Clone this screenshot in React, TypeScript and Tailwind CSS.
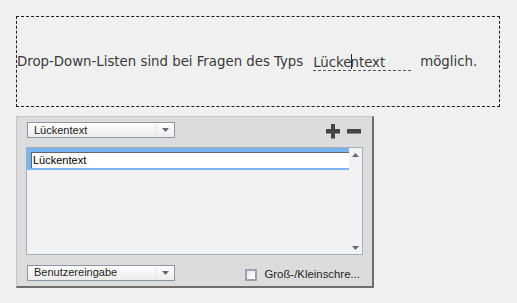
const Triangle = ({ up = false }: { up?: boolean }) => (
  <svg width="7" height="4" viewBox="0 0 7 4" className="block">
    {up ? (
      <polygon points="0,4 7,4 3.5,0" fill="#636a7c" />
    ) : (
      <polygon points="0,0 7,0 3.5,4" fill="#636a7c" />
    )}
  </svg>
);

const Dropdown = ({ label }: { label: string }) => (
  <div className="w-[148px] h-[16px] flex items-center border border-[#8d95a9] bg-gradient-to-b from-white to-[#ececec]">
    <span className="flex-1 pl-[6px] text-[11px] leading-none text-[#1c1c1c]">{label}</span>
    <div className="w-px h-[12px] bg-[#e4e4e4]" />
    <div className="w-[17px] flex justify-center">
      <Triangle />
    </div>
  </div>
);

const PlusMinus = () => (
  <div className="flex items-center gap-[6px] pt-[2px]">
    <svg width="15" height="15" viewBox="0 0 15 15">
      <rect x="0" y="5" width="14" height="5" fill="#8a8a8a" />
      <rect x="5" y="0" width="4" height="15" fill="#8a8a8a" />
      <rect x="0" y="5" width="14" height="4" fill="#454545" />
      <rect x="5" y="0" width="4" height="14" fill="#454545" />
    </svg>
    <svg width="15" height="15" viewBox="0 0 15 15">
      <rect x="0" y="5" width="14" height="5" fill="#8a8a8a" />
      <rect x="0" y="5" width="14" height="4" fill="#454545" />
    </svg>
  </div>
);

export default function App() {
  return (
    <div className="w-[517px] h-[303px] bg-[#f0f0f0] pt-4 pl-4 font-['Liberation_Sans',Arial,sans-serif]">
      <div className="w-[484px] h-[91px] border border-dashed border-[#1e1e1e] flex items-center">
        <p className="text-[14.8px] text-[#3a3a3a] whitespace-nowrap flex items-center font-['DejaVu_Sans_Condensed','DejaVu_Sans',sans-serif]">
          <span>Drop-Down-Listen sind bei Fragen des Typs</span>
          <span className="relative ml-[10px] w-[98px] border-b border-dashed border-[#555] leading-[17px]">
            Lücke
            <span className="inline-block w-px h-[15px] bg-[#222] align-middle -mt-[2px] -mx-px" />
            ntext
          </span>
          <span className="ml-[9px]">möglich.</span>
        </p>
      </div>

      <div className="mt-[9px] w-[358px] h-[172px] bg-[#dcdcdc] border border-t-[#c4c4c4] border-l-[#c4c4c4] border-r-2 border-b-2 border-r-[#6f6f6f] border-b-[#6f6f6f] pl-[9px] pt-[5px] text-[11px]">
        <div className="w-[336px] flex justify-between items-start">
          <div className="ml-px">
            <Dropdown label="Lückentext" />
          </div>
          <PlusMinus />
        </div>

        <div className="mt-[8px] w-[337px] h-[108px] border border-[#a7adba] bg-[#f2f2f2] flex">
          <div className="flex-1">
            <div className="bg-[#78b5f0] pt-[4px] pl-[4px] pb-[2px]">
              <div className="h-[16px] bg-white border-t border-l border-[#5f6672] flex items-center pl-[1px] text-[11px] text-black">
                Lückentext
              </div>
            </div>
          </div>
          <div className="w-[13px] flex flex-col items-center justify-between pt-[5px] pb-[4px]">
            <Triangle up />
            <Triangle />
          </div>
        </div>

        <div className="mt-[7px] w-[337px] flex items-center justify-between">
          <div className="ml-px">
            <Dropdown label="Benutzereingabe" />
          </div>
          <div className="flex items-center gap-[7px] pt-[4px] pr-[3px]">
            <div className="w-[12px] h-[12px] border-2 border-[#9aa0ae] bg-gradient-to-br from-[#e8e8e8] to-white" />
            <span className="text-[11.4px] text-[#1f1f1f]">Groß-/Kleinschre...</span>
          </div>
        </div>
      </div>
    </div>
  );
}
